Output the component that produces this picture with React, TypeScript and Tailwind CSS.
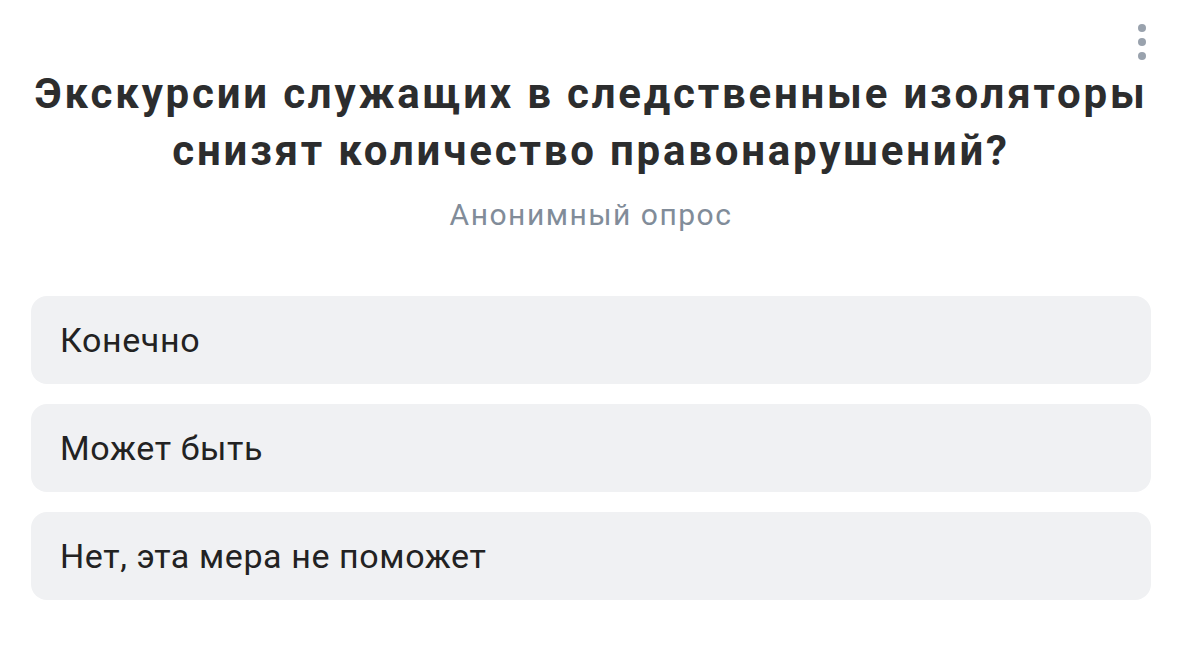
import { useState } from 'react';

const options = ['Конечно', 'Может быть', 'Нет, эта мера не поможет'];

const MoreIcon = () => (
  <svg width="10" height="38" viewBox="0 0 10 38" className="text-[#99a2ad]">
    <circle cx="5" cy="5" r="4" fill="currentColor" />
    <circle cx="5" cy="19" r="4" fill="currentColor" />
    <circle cx="5" cy="33" r="4" fill="currentColor" />
  </svg>
);

export default function App() {
  const [picked, setPicked] = useState<number | null>(null);

  return (
    <div className="w-[1185px] h-[650px] bg-white font-['Roboto','Liberation_Sans',sans-serif] relative">
      <button className="absolute right-[38px] top-[23px]">
        <MoreIcon />
      </button>
      <div className="pt-[65px] pl-[31px] pr-[34px]">
        <h1 className="-mx-[20px] whitespace-nowrap text-center text-[42px] leading-[57px] font-bold text-[#2c2d2e] tracking-[2.8px]">
          Экскурсии служащих в следственные изоляторы
          <br />
          снизят количество правонарушений?
        </h1>
        <p className="mt-[18px] text-center text-[30px] leading-[36px] text-[#818c99] tracking-[1.5px]">
          Анонимный опрос
        </p>
        <div className="mt-[63px] flex flex-col gap-[20px]">
          {options.map((o, i) => (
            <div
              key={o}
              onClick={() => setPicked(i)}
              className={`h-[88px] rounded-[16px] flex items-center px-[29px] text-[34px] text-[#222] tracking-[0.6px] cursor-pointer ${
                picked === i ? 'bg-[#e1e3e6]' : 'bg-[#f0f1f3]'
              }`}
            >
              {o}
            </div>
          ))}
        </div>
      </div>
    </div>
  );
}
